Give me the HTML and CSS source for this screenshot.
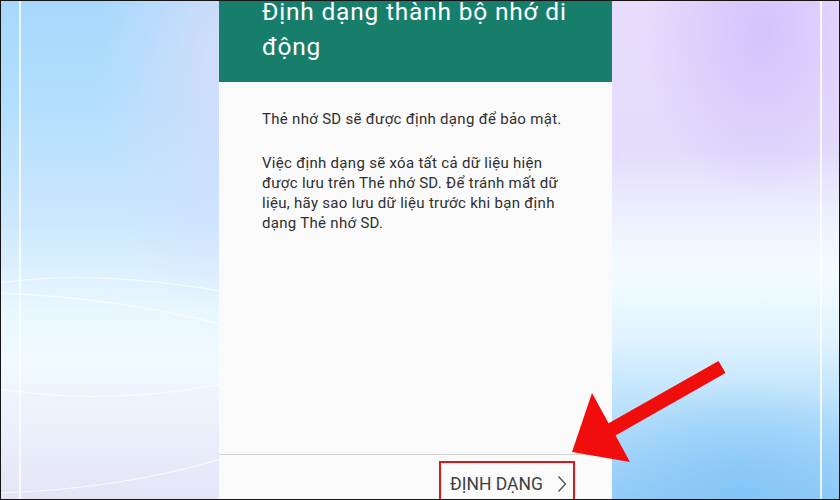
FILE: index.html
```html
<!DOCTYPE html>
<html lang="vi">
<head>
<meta charset="utf-8">
<title>Định dạng thành bộ nhớ di động</title>
<link rel="stylesheet" href="styles.css">
</head>
<body>
<div class="stage">
  <div class="side side-left">
    <svg class="curves" width="218" height="498" viewBox="0 0 218 498">
      <path d="M-2 282 Q 90 268 220 290" />
      <path d="M-2 292 Q 110 296 220 323" />
      <path d="M-2 388 Q 110 405 220 383" />
      <path d="M-2 492 Q 120 488 220 458" />
    </svg>
  </div>
  <div class="phone">
    <div class="header">
      <h1 class="title">Định dạng thành bộ nhớ di động</h1>
    </div>
    <div class="content">
      <p class="para first">Thẻ nhớ SD sẽ được định dạng để bảo mật.</p>
      <p class="para">Việc định dạng sẽ xóa tất cả dữ liệu hiện được lưu trên Thẻ nhớ SD. Để tránh mất dữ liệu, hãy sao lưu dữ liệu trước khi bạn định dạng Thẻ nhớ SD.</p>
    </div>
    <div class="footer">
      <div class="btn">
        <span class="btn-label">ĐỊNH DẠNG</span>
        <svg class="chev" width="10" height="18" viewBox="0 0 10 18"><path d="M1.5 1.5 L8.5 9 L1.5 16.5" /></svg>
      </div>
    </div>
  </div>
  <div class="side side-right"></div>
  <svg class="arrow" width="840" height="500" viewBox="0 0 840 500">
    <polygon points="572,452 592,393 608.6,423.2 718.5,360.9 725.5,373.1 615.6,435.4 630,462" />
  </svg>
</div>
</body>
</html>
```
FILE: styles.css
```css
html, body {
  margin: 0;
  padding: 0;
}
body {
  font-family: Roboto, "Noto Sans", "Liberation Sans", sans-serif;
}
.stage {
  position: relative;
  width: 840px;
  height: 500px;
  box-sizing: border-box;
  border: 1px solid #151515;
  display: grid;
  grid-template-columns: 218px 393px 1fr;
  overflow: hidden;
}
.side {
  position: relative;
  height: 100%;
}
.side-left {
  background:
    linear-gradient(90deg, transparent 18px, rgba(255,255,255,0.75) 18px, rgba(255,255,255,0.75) 20px, transparent 20px),
    radial-gradient(ellipse 120px 260px at 218px 60px, rgba(214,222,250,0.9), rgba(214,222,250,0) 100%),
    linear-gradient(180deg, #a6d8fc 0%, #b2defd 20%, #cde8fd 45%, #e9f7ff 62%, #f0faff 72%, #ecf0fb 85%, #e4e4f7 100%);
}
.curves {
  position: absolute;
  left: 0;
  top: 0;
}
.curves path {
  fill: none;
  stroke: rgba(255,255,255,0.7);
  stroke-width: 1.2;
}
.side-right {
  background:
    linear-gradient(90deg, transparent 208px, rgba(255,255,255,0.8) 208px, rgba(255,255,255,0.8) 210px, transparent 210px),
    radial-gradient(ellipse 120px 170px at 150px 30px, rgba(208,192,253,0.9), rgba(208,192,253,0) 100%),
    radial-gradient(ellipse 170px 120px at 130px 500px, rgba(130,196,247,0.9), rgba(130,196,247,0) 100%),
    linear-gradient(180deg, #e8dcfb 0%, #e4dcfb 30%, #eef2fe 45%, #f3fcff 55%, #dff3fe 68%, #b9e0fb 82%, #95cdf8 100%);
}
.phone {
  display: flex;
  flex-direction: column;
  background: #fafafa;
  height: 100%;
  overflow: hidden;
}
.header {
  background: #187e6c;
  height: 81px;
  box-sizing: border-box;
  padding: 0 20px 0 43px;
  overflow: hidden;
}
.title {
  margin: -7px 0 0 0;
  font-weight: 400;
  font-size: 24.5px;
  line-height: 35px;
  color: #ffffff;
  letter-spacing: 0.8px;
}
.content {
  flex: 1;
  padding: 27px 44px 0 43px;
}
.para {
  margin: 0 0 24px 0;
  font-size: 15px;
  line-height: 20px;
  color: #2f2f2f;
  letter-spacing: 0.3px;
}
.footer {
  border-top: 1.5px solid #d2d2d2;
  height: 44px;
  display: flex;
  justify-content: flex-end;
  align-items: flex-end;
  padding-right: 37px;
}
.btn {
  width: 136px;
  height: 38px;
  box-sizing: border-box;
  border: 2px solid #e3161c;
  border-bottom: none;
  display: flex;
  align-items: center;
  padding: 6px 0 0 9px;
  gap: 14px;
}
.btn-label {
  font-size: 17.5px;
  color: #404040;
  letter-spacing: 0px;
}
.chev path {
  fill: none;
  stroke: #555;
  stroke-width: 1.4;
}
.arrow {
  position: absolute;
  left: -1px;
  top: -1px;
  pointer-events: none;
}
.arrow polygon {
  fill: #f20d0d;
}
```
